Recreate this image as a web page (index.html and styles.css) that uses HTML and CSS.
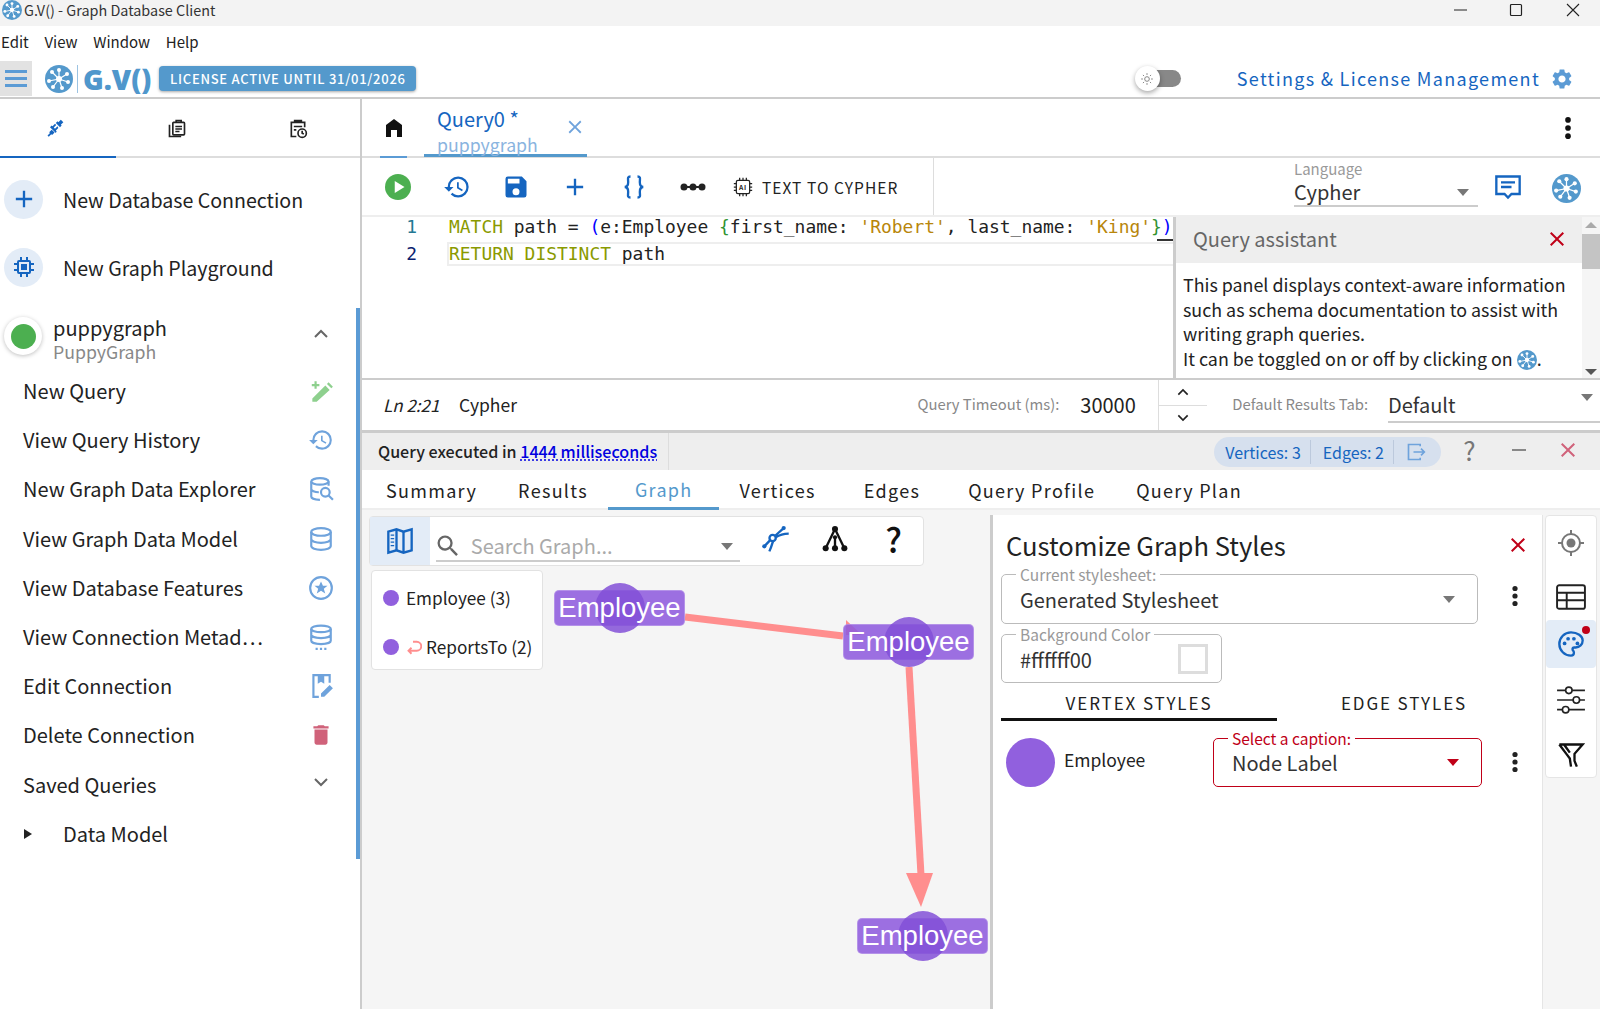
FILE: index.html
```html
<!DOCTYPE html>
<html lang="en">
<head>
<meta charset="utf-8">
<title>G.V() - Graph Database Client</title>
<link rel="stylesheet" href="styles.css">
</head>
<body>
<svg class="sprites" width="0" height="0">
  <symbol id="logo" viewBox="0 0 28 28">
    <circle cx="14" cy="14" r="14" fill="#5499cc"/>
    <g stroke="#fff" stroke-width="1.2"><path d="M14 14 14 5M14 14 22 9M14 14 23 17M14 14 17 23M14 14 8 22M14 14 4 16M14 14 7 7"/></g>
    <g fill="#fff"><circle cx="14" cy="14" r="3"/><circle cx="14" cy="5" r="2"/><circle cx="22" cy="9" r="2"/><circle cx="23" cy="17" r="2"/><circle cx="17" cy="23" r="2"/><circle cx="8" cy="22" r="2"/><circle cx="4" cy="16" r="2"/><circle cx="7" cy="7" r="2"/></g>
  </symbol>
  <symbol id="history" viewBox="0 0 24 24"><path fill="currentColor" d="M13 3a9 9 0 0 0-9 9H1l3.89 3.89.07.14L9 12H6c0-3.87 3.13-7 7-7s7 3.13 7 7-3.13 7-7 7c-1.93 0-3.68-.79-4.94-2.06l-1.42 1.42A8.954 8.954 0 0 0 13 21a9 9 0 0 0 0-18zm-1 5v5l4.28 2.54.72-1.21-3.5-2.08V8H12z"/></symbol>
  <symbol id="plus" viewBox="0 0 24 24"><path fill="currentColor" d="M19 13h-6v6h-2v-6H5v-2h6V5h2v6h6v2z"/></symbol>
  <symbol id="close" viewBox="0 0 24 24"><path fill="currentColor" d="M19 6.41 17.59 5 12 10.59 6.41 5 5 6.41 10.59 12 5 17.59 6.41 19 12 13.41 17.59 19 19 17.59 13.41 12z"/></symbol>
  <symbol id="kebab" viewBox="0 0 24 24"><g fill="currentColor"><circle cx="12" cy="4.5" r="2.6"/><circle cx="12" cy="12" r="2.6"/><circle cx="12" cy="19.5" r="2.6"/></g></symbol>
  <symbol id="db" viewBox="0 0 24 24"><g fill="none" stroke="currentColor" stroke-width="2"><ellipse cx="12" cy="5.5" rx="9" ry="3.5"/><path d="M3 5.5v13c0 2 4 3.5 9 3.5s9-1.500 9-3.500v-13M3 12c0 2 4 3.500 9 3.500s9-1.500 9-3.500"/></g></symbol>
</svg>

<div class="app">
  <div class="titlebar">
    <svg class="ico-logo-sm"><use href="#logo"/></svg>
    <span class="title-text">G.V() - Graph Database Client</span>
    <div class="winctl">
      <svg class="win" viewBox="0 0 14 14"><path d="M0 7h13" stroke="#222" fill="none"/></svg>
      <svg class="win" viewBox="0 0 14 14"><rect x="1.500" y="1.500" width="11" height="11" rx="1" stroke="#222" stroke-width="1.200" fill="none"/></svg>
      <svg class="win" viewBox="0 0 14 14"><path d="M1 1l12 12M13 1 1 13" stroke="#222" stroke-width="1.100" fill="none"/></svg>
    </div>
  </div>
  <div class="menubar"><span>Edit</span><span>View</span><span>Window</span><span>Help</span></div>
  <header class="header">
    <div class="burger"><i></i><i></i><i></i></div>
    <svg class="ico-logo"><use href="#logo"/></svg>
    <span class="logo-div"></span>
    <span class="logo-text">G.V()</span>
    <span class="license">LICENSE ACTIVE UNTIL 31/01/2026</span>
    <div class="header-right">
      <div class="toggle"><span class="knob"><svg viewBox="0 0 24 24" class="sun"><g fill="none" stroke="#777" stroke-width="1.500"><circle cx="12" cy="12" r="4"/><path d="M12 2v3M12 19v3M2 12h3M19 12h3M5 5l2 2M17 17l2 2M5 19l2-2M17 7l2-2"/></g></svg></span></div>
      <span class="settings">Settings &amp; License Management</span>
      <svg class="gear" viewBox="0 0 24 24"><path fill="#5b9bd5" d="M19.14 12.94c.04-.3.06-.61.06-.94 0-.32-.02-.64-.07-.94l2.03-1.58a.49.49 0 0 0 .12-.61l-1.92-3.32a.488.488 0 0 0-.59-.22l-2.39.96c-.5-.38-1.03-.7-1.62-.94l-.36-2.54a.484.484 0 0 0-.48-.41h-3.84c-.24 0-.43.17-.47.41l-.36 2.54c-.59.24-1.13.57-1.62.94l-2.39-.96c-.22-.08-.47 0-.59.22L2.74 8.87c-.12.21-.08.47.12.61l2.03 1.58c-.05.3-.09.63-.09.94s.02.64.07.94l-2.03 1.58a.49.49 0 0 0-.12.61l1.92 3.32c.12.22.37.29.59.22l2.39-.96c.5.38 1.03.7 1.62.94l.36 2.54c.05.24.24.41.48.41h3.84c.24 0 .44-.17.47-.41l.36-2.54c.59-.24 1.13-.56 1.62-.94l2.39.96c.22.08.47 0 .59-.22l1.92-3.32c.12-.22.07-.47-.12-.61l-2.01-1.58zM12 15.6c-1.98 0-3.6-1.62-3.6-3.6s1.62-3.6 3.6-3.6 3.6 1.62 3.6 3.6-1.62 3.6-3.6 3.6z"/></svg>
    </div>
  </header>

  <div class="workspace">
    <aside class="sidebar">
      <div class="side-tabs">
        <div class="side-tab active">
          <svg viewBox="0 0 24 24" class="i20"><path fill="#1565c0" d="M3 21l3-3-1-1 3-3 3.500 3.500-3 3-1-1-3 3zM13 18 6 11l2-2 1 1 3-3 1.500 1.500-3 3 1.500 1.500 3-3L16 12l-3 3 1 1zM13 6l2-2 1 1 3-3 3 3-3 3 1 1-2 2z"/></svg>
        </div>
        <div class="side-tab">
          <svg viewBox="0 0 24 24" class="i20"><g fill="none" stroke="#222" stroke-width="2"><rect x="7" y="4" width="14" height="15" rx="1"/><path d="M3 7v14h14M10 9h8M10 12h8M10 15h5"/><path d="M11 4V2h6v2" /></g></svg>
        </div>
        <div class="side-tab">
          <svg viewBox="0 0 24 24" class="i20"><g fill="none" stroke="#222" stroke-width="2"><path d="M10 21H4V4h16v6M8 4V2h8v2M7 9h10M7 13h3"/><circle cx="17" cy="17" r="5"/><path d="M17 14v3l2 1"/></g></svg>
        </div>
      </div>
      <div class="action-row">
        <span class="round-btn"><svg class="i28 blue"><use href="#plus"/></svg></span>
        <span>New Database Connection</span>
      </div>
      <div class="action-row">
        <span class="round-btn"><svg viewBox="0 0 24 24" class="i24"><g fill="none" stroke="#1565c0" stroke-width="2"><rect x="6" y="6" width="12" height="12" rx="1"/><rect x="10" y="10" width="4" height="4" fill="#1565c0"/><path d="M9 2v3M15 2v3M9 19v3M15 19v3M2 9h3M2 15h3M19 9h3M19 15h3"/></g></svg></span>
        <span>New Graph Playground</span>
      </div>
      <div class="conn-row">
        <span class="status-dot"><i></i></span>
        <div class="conn-text"><div class="conn-name">puppygraph</div><div class="conn-type">PuppyGraph</div></div>
        <svg viewBox="0 0 24 24" class="i24 grey chev"><path fill="none" stroke="currentColor" stroke-width="2" d="M6 15l6-6 6 6"/></svg>
      </div>
      <ul class="menu">
        <li><span>New Query</span><svg viewBox="0 0 24 24" class="i26"><path fill="#8ed08e" d="M4 22v-3L16 7l4 4L8 22zM17.500 5.500 19 4l4 4-1.500 1.500zM6 3h2v2.500h2.500v2H8V10H6V7.500H3.500v-2H6z"/></svg></li>
        <li><span>View Query History</span><svg class="i26 lblue"><use href="#history"/></svg></li>
        <li><span>New Graph Data Explorer</span><svg viewBox="0 0 24 24" class="i26 lblue"><g fill="none" stroke="currentColor" stroke-width="2"><ellipse cx="11" cy="5" rx="8" ry="3"/><path d="M3 5v14c0 1.500 3 3 8 3M19 5v4M3 12c0 1.500 3 3 7 3"/><circle cx="16" cy="15" r="4"/><path d="M19 18l4 4"/></g></svg></li>
        <li><span>View Graph Data Model</span><svg class="i26 lblue"><use href="#db"/></svg></li>
        <li><span>View Database Features</span><svg viewBox="0 0 24 24" class="i26 lblue"><circle cx="12" cy="12" r="10" fill="none" stroke="currentColor" stroke-width="2"/><path fill="currentColor" d="M12 6l1.800 4h4.200l-3.400 2.700 1.300 4.300-3.900-2.500L8.100 17l1.300-4.300L6 10h4.200z"/></svg></li>
        <li><span>View Connection Metad⋯</span><svg viewBox="0 0 24 24" class="i26 lblue"><g fill="none" stroke="currentColor" stroke-width="2"><ellipse cx="12" cy="4.500" rx="9" ry="3"/><path d="M3 4.500v11c0 1.700 4 3 9 3s9-1.300 9-3v-11M3 10c0 1.700 4 3 9 3s9-1.300 9-3M7 23h2M11 23h2M15 23h2"/></g></svg></li>
        <li><span>Edit Connection</span><svg viewBox="0 0 24 24" class="i26 lblue"><g fill="none" stroke="currentColor" stroke-width="2"><path d="M20 9V2H5v20h5"/></g><path fill="currentColor" d="M9 2h6v8l-3-2-3 2zM12 22v-3l8-8 3 3-8 8z"/></svg></li>
        <li><span>Delete Connection</span><svg viewBox="0 0 24 24" class="i26"><path fill="#d0627a" d="M6 19c0 1.100.9 2 2 2h8c1.100 0 2-.9 2-2V7H6v12zM19 4h-3.500l-1-1h-5l-1 1H5v2h14V4z"/></svg></li>
        <li><span>Saved Queries</span><svg viewBox="0 0 24 24" class="i24 grey chev"><path fill="none" stroke="currentColor" stroke-width="2" d="M6 9l6 6 6-6"/></svg></li>
        <li class="tree"><i class="tri"></i><span>Data Model</span></li>
      </ul>
      <div class="side-scroll"></div>
    </aside>

    <main class="main">
      <div class="query-tabs">
        <div class="home-tab"><svg viewBox="0 0 24 24" class="i24"><path fill="#111" d="M12 3 4 9v12h5v-7h6v7h5V9z"/></svg></div>
        <div class="query-tab">
          <div class="q-title">Query0 *</div>
          <div class="q-sub">puppygraph</div>
          <svg class="i22 qx"><use href="#close"/></svg>
        </div>
        <svg class="i26 kebab-top"><use href="#kebab"/></svg>
      </div>

      <div class="toolbar">
        <div class="tool-group">
          <span class="tool"><svg viewBox="0 0 24 24" class="i26"><circle cx="12" cy="12" r="12" fill="#4caf50"/><path fill="#fff" d="M9 6.500l9 5.500-9 5.500z"/></svg></span>
          <span class="tool"><svg class="i28 blue"><use href="#history"/></svg></span>
          <span class="tool"><svg viewBox="0 0 24 24" class="i28 blue"><path fill="currentColor" d="M17 3H5a2 2 0 0 0-2 2v14a2 2 0 0 0 2 2h14a2 2 0 0 0 2-2V7l-4-4zm-5 16a3 3 0 1 1 0-6 3 3 0 0 1 0 6zm3-10H5V5h10v4z"/></svg></span>
          <span class="tool"><svg class="i28 blue"><use href="#plus"/></svg></span>
          <span class="tool"><svg viewBox="0 0 24 24" class="i28 blue"><path fill="none" stroke="currentColor" stroke-width="2" d="M9 3C6 3 7 5 7 8s-1 4-3 4c2 0 3 1 3 4s-1 5 2 5M15 3c3 0 2 2 2 5s1 4 3 4c-2 0-3 1-3 4s1 5-2 5"/></svg></span>
          <span class="tool"><svg viewBox="0 0 28 12" class="dots"><path d="M2 6h24" stroke="#222" stroke-width="2"/><g fill="#222"><circle cx="5" cy="6" r="3.500"/><circle cx="14" cy="6" r="3.500"/><circle cx="23" cy="6" r="3.500"/></g></svg></span>
          <span class="t2c">
            <svg viewBox="0 0 24 24" class="i20"><g fill="none" stroke="#222" stroke-width="1.500"><rect x="4" y="4" width="16" height="16" rx="2"/><path d="M8 1v3M12 1v3M16 1v3M8 20v3M12 20v3M16 20v3M1 8h3M1 12h3M1 16h3M20 8h3M20 12h3M20 16h3"/></g><text x="12" y="15.500" class="ai">AI</text></svg>
            TEXT TO CYPHER
          </span>
        </div>
        <div class="lang-area">
          <div class="lang">
            <div class="lang-label">Language</div>
            <div class="lang-val">Cypher<i class="caret"></i></div>
          </div>
          <svg viewBox="0 0 24 24" class="i28 chat"><path fill="none" stroke="currentColor" stroke-width="2" d="M2 3h20v15h-7l-3 3-3-3H2zM6 8h12M6 12h9"/></svg>
          <svg class="logo28"><use href="#logo"/></svg>
        </div>
      </div>

      <div class="editor-split">
        <div class="editor">
          <div class="code-line"><span class="ln ln1">1</span><code><span class="k">MATCH</span> path = <span class="b1">(</span>e:Employee <span class="b2">{</span>first_name: <span class="s">'Robert'</span>, last_name: <span class="s">'King'</span><span class="b2">}</span><span class="b1">)</span></code></div>
          <div class="code-line active"><span class="ln ln2">2</span><code><span class="k">RETURN DISTINCT</span> path</code></div>
          <span class="cursor-mark"></span>
        </div>
        <div class="assistant">
          <div class="assist-head"><span>Query assistant</span><svg class="i24 red"><use href="#close"/></svg></div>
          <div class="assist-body">
            This panel displays context-aware information such as schema documentation to assist with writing graph queries.<br>
            It can be toggled on or off by clicking on <svg class="logo-inline"><use href="#logo"/></svg>.
          </div>
        </div>
        <div class="vscroll"><i class="up"></i><span class="thumb"></span><i class="down"></i></div>
      </div>

      <div class="statusbar">
        <em class="pos">Ln 2:21</em>
        <span class="mode">Cypher</span>
        <span class="muted timeout">Query Timeout (ms):</span>
        <span class="num">30000</span>
        <div class="spinner">
          <span><svg viewBox="0 0 24 24" class="i16"><path fill="none" stroke="#222" stroke-width="2.500" d="M5 16l7-7 7 7"/></svg></span>
          <span><svg viewBox="0 0 24 24" class="i16"><path fill="none" stroke="#222" stroke-width="2.500" d="M5 8l7 7 7-7"/></svg></span>
        </div>
        <span class="muted drt">Default Results Tab:</span>
        <div class="drt-select"><span>Default</span><i class="caret"></i></div>
      </div>

      <div class="results-head">
        <div class="exec">Query executed in <a href="#" class="ms">1444 milliseconds</a></div>
        <div class="head-right">
          <div class="pill">
            <span>Vertices: 3</span><span>Edges: 2</span>
            <span><svg viewBox="0 0 24 24" class="i20"><path fill="none" stroke="currentColor" stroke-width="2" d="M17 5V3H3v18h14v-2M9 12h13M18 8l4 4-4 4"/></svg></span>
          </div>
          <span class="head-btn help">?</span>
          <span class="head-btn"><svg viewBox="0 0 24 24" class="i24"><path d="M5 12h14" stroke="#888" stroke-width="2"/></svg></span>
          <span class="head-btn"><svg class="i24 pink"><use href="#close"/></svg></span>
        </div>
      </div>

      <nav class="result-tabs">
        <span>Summary</span><span>Results</span><span class="on">Graph</span><span>Vertices</span><span class="roomy">Edges</span><span>Query Profile</span><span>Query Plan</span>
      </nav>

      <section class="graph-area">
        <div class="canvas">
          <svg class="edges" viewBox="0 0 630 500" width="630" height="500">
            <path d="M323 107 481 126" stroke="#ff8e8e" stroke-width="7" fill="none"/>
            <path d="M547 157 559 365" stroke="#ff8e8e" stroke-width="7" fill="none"/>
            <path d="M544 363H571L559 397z" fill="#ff8e8e"/>
            <path d="M484 110 500 125H484z" fill="#ff8e8e"/>
          </svg>
          <div class="node n1"><i></i><span>Employee</span></div>
          <div class="node n2"><i></i><span>Employee</span></div>
          <div class="node n3"><i></i><span>Employee</span></div>

          <div class="search-card">
            <span class="map-btn"><svg viewBox="0 0 24 24" class="i28 blue"><g fill="none" stroke="currentColor" stroke-width="2"><path d="M2 4l7-2 6 2 7-2v18l-7 2-6-2-7 2z"/><path d="M9 2v18M15 4v18"/></g><path d="M4 7h3M4 10h3M4 13h3M4 16h3" stroke="currentColor"/></svg></span>
            <div class="search-field">
              <svg viewBox="0 0 24 24" class="i28 sgrey"><path fill="currentColor" d="M15.500 14h-.79l-.28-.27A6.471 6.471 0 0 0 16 9.500 6.500 6.500 0 1 0 9.500 16c1.610 0 3.090-.59 4.230-1.570l.27.28v.79l5 4.990L20.490 19l-4.990-5zm-6 0C7.010 14 5 11.990 5 9.500S7.010 5 9.500 5 14 7.010 14 9.500 11.990 14 9.500 14z"/></svg>
              <span class="placeholder">Search Graph...</span>
              <i class="caret"></i>
            </div>
            <span class="s-tool"><svg viewBox="0 0 24 24" class="i28 blue"><g fill="none" stroke="currentColor" stroke-width="2"><circle cx="9.100" cy="11.100" r="2.700"/><path d="M11.500 9 18.600 2.600M11.800 10.500C15 8.500 19 7.500 22.900 7.400M7 13 2 18.300M9.500 13.800C8.500 17 7.500 20 6.300 22.600"/></g><g fill="currentColor"><circle cx="18.600" cy="2.600" r="1.800"/><circle cx="2" cy="18.300" r="1.800"/></g></svg></span>
            <span class="s-tool"><svg viewBox="0 0 24 24" class="i28"><path fill="none" stroke="#111" stroke-width="2" d="M12 3.500 4 20M12 3.500 20 20M12 10v10"/><g fill="#111"><circle cx="12" cy="3.500" r="2.600"/><circle cx="12" cy="10.500" r="1.800"/><circle cx="4" cy="20" r="2.600"/><circle cx="12" cy="20" r="2.600"/><circle cx="20" cy="20" r="2.600"/></g></svg></span>
            <span class="s-tool qmark">?</span>
          </div>

          <div class="legend">
            <div class="legend-row"><i class="dot"></i><span>Employee (3)</span></div>
            <div class="legend-row"><i class="dot"></i><svg viewBox="0 0 24 24" class="loop"><path fill="none" stroke="#ff8e8e" stroke-width="2.500" d="M12 5h5a6 6 0 0 1 0 12H6M10 13l-4 4 4 4"/></svg><span>ReportsTo (2)</span></div>
          </div>
        </div>

        <div class="style-panel">
          <div class="panel-title"><span>Customize Graph Styles</span><svg class="i24 red"><use href="#close"/></svg></div>
          <div class="field-row">
            <fieldset class="field wide"><legend>Current stylesheet:</legend><div class="field-val">Generated Stylesheet<i class="caret"></i></div></fieldset>
            <svg class="i24 kebab"><use href="#kebab"/></svg>
          </div>
          <fieldset class="field color"><legend>Background Color</legend><div class="field-val">#ffffff00<b class="swatch"></b></div></fieldset>
          <div class="style-tabs"><span class="on">VERTEX STYLES</span><span>EDGE STYLES</span></div>
          <div class="vertex-row">
            <i class="v-circle"></i>
            <span class="v-name">Employee</span>
            <fieldset class="field caption"><legend>Select a caption:</legend><div class="field-val">Node Label<i class="caret"></i></div></fieldset>
            <svg class="i24 kebab"><use href="#kebab"/></svg>
          </div>
        </div>

        <div class="tool-strip">
          <span><svg viewBox="0 0 28 28" class="i28"><g fill="none" stroke="#777" stroke-width="2"><circle cx="14" cy="14" r="9"/><path d="M14 1v4M14 23v4M1 14h4M23 14h4"/></g><circle cx="14" cy="14" r="4.500" fill="#777"/></svg></span>
          <span><svg viewBox="0 0 28 28" class="i30"><g fill="none" stroke="#222" stroke-width="1.800"><rect x="1" y="3" width="26" height="22" rx="2"/><path d="M1 10h26M1 17h26M10 10v15"/></g></svg></span>
          <span class="on"><svg viewBox="0 0 24 24" class="i28 blue"><g fill="none" stroke="currentColor" stroke-width="2"><path d="M12 2C6.500 2 2 6.500 2 12s4.500 10 10 10c1.400 0 2.500-1.100 2.500-2.500 0-.6-.2-1.200-.6-1.700-.4-.4-.6-1-.6-1.300 0-.8.700-1.500 1.500-1.500H16c3.300 0 6-2.700 6-6 0-4-4.500-7-10-7z"/></g><g fill="currentColor"><circle cx="6.500" cy="11.500" r="1.600"/><circle cx="9.500" cy="7.500" r="1.600"/><circle cx="14.500" cy="7.500" r="1.600"/><circle cx="17.500" cy="11.500" r="1.600"/></g></svg><b class="reddot"></b></span>
          <span><svg viewBox="0 0 28 28" class="i30"><g fill="none" stroke="#222" stroke-width="1.500"><path d="M1 5h8M15 5h12M1 14h15M22 14h5M1 23h5M12 23h15"/><circle cx="12" cy="5" r="3"/><circle cx="19" cy="14" r="3"/><circle cx="9" cy="23" r="3"/></g></svg></span>
          <span><svg viewBox="0 0 24 24" class="i28"><g fill="none" stroke="#111" stroke-width="2"><path d="M2 3h20l-7 8v6l2 5M2 3l6 8 3 4 1 7M6 3l5 7"/></g></svg></span>
        </div>
      </section>
    </main>
  </div>
</div>
</body>
</html>
```
FILE: styles.css
```css
* { box-sizing: border-box; }
html, body { margin: 0; height: 100%; overflow: hidden; background: #fff; }
body { font-family: "Noto Sans CJK JP", "Noto Sans", sans-serif; color: #222; font-size: 18px; }
i, em { font-style: normal; }
.sprites { position: absolute; }
svg { display: block; flex: none; }
.i16 { width: 16px; height: 16px; }
.i20 { width: 20px; height: 20px; }
.i22 { width: 22px; height: 22px; }
.i24 { width: 24px; height: 24px; }
.i26 { width: 26px; height: 26px; }
.i28 { width: 28px; height: 28px; }
.i30 { width: 30px; height: 30px; }
.blue { color: #1565c0; }
.lblue { color: #6fa3dc; }
.grey { color: #666; }
.red { color: #c00018; }
.pink { color: #d0627a; }
.app { display: flex; flex-direction: column; width: 1600px; height: 1009px; overflow: hidden; }

.titlebar { height: 26px; flex: none; background: #f3f3f3; display: flex; align-items: center; font-size: 14.400px; line-height: 18px; padding-bottom: 7px; }
.ico-logo-sm { width: 20px; height: 20px; margin: 0 2px 0 2px; }
.title-text { color: #333; }
.winctl { margin-left: auto; display: flex; gap: 43px; padding-right: 20px; }
.win { width: 14px; height: 14px; }
.win:first-child { margin-right: -2px; }

.menubar { height: 34px; flex: none; display: flex; align-items: center; gap: 15.700px; padding-left: 1px; padding-bottom: 2px; font-size: 15px; line-height: 20px; }

.header { height: 39px; flex: none; display: flex; align-items: center; border-bottom: 2px solid #ccc; }
.burger { width: 32px; height: 35px; background: #e2e2e2; display: flex; flex-direction: column; justify-content: center; gap: 4px; padding: 0 5px; }
.burger i { height: 3px; background: #5b9bd5; }
.ico-logo { width: 28px; height: 28px; margin-left: 13px; }
.logo-div { width: 1px; height: 28px; background: #9cc3e2; margin: 0 5px 0 4px; }
.logo-text { font-family: "Open Sans", "Noto Sans", sans-serif; font-weight: 800; font-size: 28px; line-height: 36px; color: #4f97cc; width: 70px; white-space: nowrap; }
.license { margin-left: 6px; height: 25px; line-height: 25px; padding: 0 10px 0 11px; background: #5499cc; color: #fff; font-weight: 500; font-size: 13px; letter-spacing: .74px; border-radius: 4px; box-shadow: 0 1px 3px rgba(0,0,0,.35); white-space: nowrap; }
.header-right { margin-left: auto; display: flex; align-items: center; }
.toggle { width: 33px; height: 17px; border-radius: 9px; background: #888; position: relative; margin-right: 56px; }
.knob { position: absolute; left: -13px; top: -4px; width: 25px; height: 25px; border-radius: 50%; background: #fff; box-shadow: 0 2px 5px rgba(0,0,0,.35); display: flex; align-items: center; justify-content: center; }
.sun { width: 14px; height: 14px; }
.settings { color: #1565c0; font-size: 18px; letter-spacing: 1.300px; line-height: 24px; white-space: nowrap; margin-top: -2px; }
.gear { width: 24px; height: 24px; margin: 0 26px 0 10px; }

.workspace { flex: 1; display: flex; min-height: 0; }

.sidebar { width: 362px; flex: none; border-right: 2px solid #ccc; position: relative; }
.side-tabs { height: 59px; display: flex; border-bottom: 2px solid #ddd; margin-bottom: 7px; }
.side-tab { width: 121px; display: flex; align-items: center; justify-content: center; margin-bottom: -2px; }
.side-tab.active { width: 116px; border-bottom: 2px solid #1565c0; padding-right: 6px; }
.action-row { height: 68px; display: flex; align-items: center; font-size: 19.600px; line-height: 28px; padding-left: 4px; gap: 20px; }
.action-row span:last-child { padding-top: 1px; }
.round-btn { width: 39px; height: 39px; border-radius: 50%; background: #e3ecf7; display: flex; align-items: center; justify-content: center; }
.conn-row { height: 56px; margin-top: 7px; display: flex; align-items: center; padding-left: 4px; position: relative; }
.status-dot { width: 38px; height: 38px; border-radius: 50%; background: #fff; box-shadow: 0 1px 4px rgba(0,0,0,.25); display: flex; align-items: center; justify-content: center; flex: none; }
.status-dot i { width: 25px; height: 25px; border-radius: 50%; background: #4caf50; }
.conn-text { margin-left: 11px; margin-top: 6px; }
.conn-name { font-size: 20px; line-height: 24px; }
.conn-type { font-size: 17.700px; line-height: 23px; color: #888; }
.chev { position: absolute; left: 309px; top: 14px; }
.menu { list-style: none; margin: 2.500px 0 0; padding: 0; }
.menu li { height: 49.200px; display: flex; align-items: center; justify-content: space-between; padding: 0 26px 0 23px; font-size: 20px; line-height: 28px; position: relative; white-space: nowrap; }
.menu li .chev { top: 10px; }
.menu .tree { justify-content: flex-start; }
.tri { width: 0; height: 0; border-left: 8px solid #222; border-top: 5px solid transparent; border-bottom: 5px solid transparent; margin: 0 31px 0 1px; }
.side-scroll { position: absolute; left: 356px; top: 209px; width: 4px; height: 551px; background: #5b9bd5; }

.main { flex: 1; min-width: 0; display: flex; flex-direction: column; }
.query-tabs { height: 59px; flex: none; display: flex; border-bottom: 2px solid #ddd; position: relative; padding-left: 18px; }
.home-tab { width: 27px; display: flex; align-items: center; justify-content: center; border-bottom: 2px solid #5b9bd5; margin-bottom: -2px; }
.query-tab { width: 163px; margin-left: 17px; padding-left: 13px; border-bottom: 3px solid #5499cc; margin-bottom: -1px; position: relative; }
.q-title { color: #1565c0; font-size: 20px; line-height: 24px; margin-top: 8px; }
.q-sub { color: #8ab4e0; font-size: 17.700px; line-height: 21px; margin-top: 3px; }
.qx { position: absolute; right: 1px; top: 17px; color: #6fa3dc; }
.kebab-top { margin-left: auto; align-self: center; margin-right: 19px; color: #111; }

.toolbar { height: 57px; flex: none; display: flex; }
.tool-group { width: 572px; flex: none; display: flex; align-items: center; padding-left: 6px; border-right: 1px solid #ddd; }
.tool { width: 59px; display: flex; justify-content: center; }
.dots { width: 28px; height: 12px; }
.t2c { display: flex; align-items: center; gap: 9px; margin-left: 11px; font-size: 15.500px; letter-spacing: 1.050px; line-height: 20px; white-space: nowrap; }
.ai { font-size: 8px; font-weight: 700; text-anchor: middle; fill: #222; }
.lang-area { flex: 1; display: flex; align-items: center; padding-left: 360px; }
.lang { width: 184px; border-bottom: 2px solid #ccc; margin-top: -7px; }
.lang-label { font-size: 15px; line-height: 18px; color: #999; }
.lang-val { font-size: 20px; line-height: 27px; color: #333; position: relative; }
.caret { position: absolute; width: 0; height: 0; border-left: 6.500px solid transparent; border-right: 6.500px solid transparent; border-top: 7px solid #777; }
.lang-val .caret { right: 9px; top: 11px; }
.chat { color: #1565c0; margin-left: 16px; margin-top: 0; }
.logo28 { width: 29px; height: 29px; margin-left: 30px; margin-top: 4px; }

.editor-split { height: 165px; flex: none; display: flex; border-bottom: 2px solid #ccc; position: relative; border-top: 2px solid #eee; }
.editor { flex: 1; min-width: 0; position: relative; overflow: hidden; }
.code-line { height: 27px; display: flex; font-family: "DejaVu Sans Mono", "Liberation Mono", monospace; font-size: 17.950px; line-height: 27px; white-space: pre; position: relative; top: -4px; }
.code-line code { font: inherit; }
.ln { width: 87px; flex: none; padding-right: 32px; text-align: right; }
.ln1 { color: #237893; }
.ln2 { color: #0b216f; }
.active code { display: block; width: 800px; border: 2px solid #eee; border-right: none; line-height: 20px; height: 24px; margin: 2px 0 0 -2px; }
.k { color: #8a9a00; }
.s { color: #b8860b; }
.b1 { color: #0000ff; }
.b2 { color: #319331; }
.cursor-mark { position: absolute; right: 0; top: 22px; width: 16px; height: 2px; background: #333; }
.assistant { width: 409px; flex: none; border-left: 3px solid #ccc; display: flex; flex-direction: column; }
.assist-head { height: 46px; background: #eee; display: flex; align-items: center; justify-content: space-between; padding: 0 13px 3px 17px; font-size: 20px; line-height: 28px; color: #666; }
.assist-body { padding: 9px 6px 0 7px; font-size: 17.850px; line-height: 24.600px; }
.logo-inline { display: inline-block; width: 20px; height: 20px; vertical-align: -4px; }
.vscroll { width: 18px; flex: none; background: #f5f5f5; position: relative; }
.up, .down { position: absolute; left: 3px; width: 0; height: 0; border-left: 6px solid transparent; border-right: 6px solid transparent; }
.up { top: 5px; border-bottom: 6px solid #aaa; }
.down { bottom: 3px; border-top: 6px solid #555; }
.thumb { position: absolute; left: 0; top: 17px; width: 18px; height: 35px; background: #c4c4c4; }

.statusbar { height: 50px; flex: none; display: flex; align-items: center; position: relative; padding-left: 21px; }
.pos { font-style: italic; font-size: 17px; line-height: 24px; width: 76px; }
.mode { font-size: 17.500px; line-height: 24px; margin-top: 0; }
.muted { color: #888; font-size: 14.800px; line-height: 22px; white-space: nowrap; margin-top: -2px; }
.timeout { margin-left: auto; }
.num { font-size: 20px; line-height: 26px; margin-left: 21px; width: 78px; }
.spinner { width: 49px; height: 50px; border-left: 1px solid #ddd; display: flex; flex-direction: column; }
.spinner span { flex: 1; display: flex; justify-content: center; align-items: center; }
.spinner span:first-child { border-bottom: 1px solid #ddd; }
.drt { margin-left: 25px; }
.drt-select { width: 212px; margin-left: 20px; height: 36px; border-bottom: 2px solid #ccc; position: relative; font-size: 20px; line-height: 35px; color: #333; }
.drt-select .caret { right: 7px; top: 7px; }

.results-head { height: 40px; flex: none; background: #eee; border-top: 3px solid #ccc; display: flex; align-items: center; }
.exec { width: 307px; padding-left: 16px; height: 100%; border-right: 1px solid #ddd; font-weight: 500; font-size: 16.100px; line-height: 37px; white-space: nowrap; }
.ms { color: #0000e0; text-decoration: underline dotted; text-underline-offset: 2px; }
.head-right { margin-left: auto; display: flex; align-items: center; padding-right: 8px; }
.pill { height: 30px; background: #d6e0ee; border-radius: 15px; display: flex; align-items: center; color: #1565c0; font-size: 16px; line-height: 24px; padding: 0 15px 0 11px; margin-right: 4px; }
.pill span { padding: 0 9px 0 0; margin-right: 12px; border-right: 1px solid #bcc9dc; white-space: nowrap; }
.pill span:last-child { border: 0; margin: 0; padding: 0; color: #6fa3dc; }
.head-btn { width: 49px; display: flex; justify-content: center; margin-top: -4px; }
.help { font-size: 26px; line-height: 30px; color: #777; }

.result-tabs { height: 40px; flex: none; display: flex; border-bottom: 2px solid #eee; font-size: 18px; letter-spacing: 1.300px; line-height: 40px; }
.result-tabs span { padding: 0 20.500px; height: 40px; white-space: nowrap; }
.result-tabs span:first-child { padding-left: 24px; }
.result-tabs .on { color: #5499cc; border-bottom: 3px solid #5499cc; padding: 0 26.500px; line-height: 38px; margin-bottom: -1px; }
.result-tabs .roomy { padding: 0 27.500px; }

.graph-area { flex: 1; min-height: 0; background: #f5f5f5; display: flex; position: relative; }
.canvas { width: 628px; flex: none; position: relative; overflow: hidden; }
.edges { position: absolute; left: 0; top: 0; }
.node { position: absolute; width: 131px; height: 36px; border-radius: 5px; background: rgba(144, 92, 222, .88); border: 1px solid rgba(255, 255, 255, .25); display: flex; align-items: center; justify-content: center; }
.node i { position: absolute; left: 40px; top: -8px; width: 50px; height: 50px; border-radius: 50%; background: rgba(130, 80, 215, .85); }
.node span { position: relative; color: #fff; font-family: "Liberation Sans", Arial, sans-serif; font-size: 27.500px; line-height: 32px; }
.n1 { left: 192px; top: 80px; }
.n2 { left: 481px; top: 114px; }
.n3 { left: 495px; top: 408px; }

.search-card { position: absolute; left: 7px; top: 6px; width: 555px; height: 50px; background: #fff; border: 1px solid #e2e2e2; border-radius: 4px; display: flex; align-items: center; }
.map-btn { width: 60px; height: 48px; background: #e3ecf7; display: flex; align-items: center; justify-content: center; }
.search-field { width: 305px; height: 45px; align-self: flex-start; margin: 0 7px 0 6px; border-bottom: 2px solid #ccc; display: flex; align-items: center; position: relative; padding: 16px 0 0 0; }
.sgrey { color: #666; margin: -2px 0 0 -2px; }
.placeholder { margin-left: 9px; font-size: 20px; line-height: 26px; color: #aaa; margin-top: -1px; }
.search-field .caret { right: 7px; top: 26px; }
.s-tool { width: 59px; display: flex; justify-content: center; margin-top: -4px; }
.qmark { font-size: 34px; line-height: 36px; color: #111; font-weight: 500; }

.legend { position: absolute; left: 9px; top: 60px; width: 172px; height: 100px; background: #fff; border: 1px solid #e2e2e2; border-radius: 4px; padding-top: 2px; }
.legend-row { height: 49px; display: flex; align-items: center; padding-left: 11px; font-size: 17.200px; line-height: 24px; white-space: nowrap; }
.dot { width: 16px; height: 16px; border-radius: 50%; background: #9160de; margin-right: 7px; flex: none; }
.loop { width: 18px; height: 18px; margin: 0 4px 0 -2px; }

.style-panel { width: 553px; flex: none; margin-top: 5px; background: #fff; border-left: 3px solid #ccc; border-right: 1px solid #e5e5e5; padding: 0 0 0 8px; position: relative; }
.panel-title { height: 52px; display: flex; align-items: center; padding: 8px 1px 0 5px; justify-content: space-between; font-size: 25.600px; line-height: 34px; width: 530px; }
.field { margin: 0; padding: 0 0 0 18px; border: 1px solid #bbb; border-radius: 5px; min-width: 0; }
.field legend { padding: 0 4px; margin-left: -4px; font-size: 15.500px; line-height: 14px; color: #999; white-space: nowrap; }
.field-val { font-size: 20px; line-height: 32px; padding-top: 3px; color: #333; position: relative; }
.field-row { display: flex; align-items: center; }
.wide { width: 477px; height: 57px; }
.wide .caret { right: 22px; top: 15px; }
.kebab { color: #222; margin-left: 25px; }
.color { width: 221px; height: 56px; margin-top: 3px; }
.color .field-val { padding-top: 3px; }
.swatch { position: absolute; right: 13px; top: 3px; width: 30px; height: 30px; border: 3px solid #ddd; }
.style-tabs { display: flex; width: 530px; height: 38px; margin-top: 6px; font-size: 17px; letter-spacing: 1.900px; line-height: 28px; }
.style-tabs span { flex: 1; text-align: center; white-space: nowrap; }
.style-tabs .on { width: 276px; flex: none; border-bottom: 3px solid #111; height: 32px; }
.vertex-row { display: flex; align-items: center; margin-top: 4px; position: relative; }
.v-circle { width: 49px; height: 49px; border-radius: 50%; background: #9160de; margin: 6px 0 0 5px; flex: none; }
.v-name { font-size: 17.500px; line-height: 24px; margin-left: 9px; width: 149px; margin-top: 2px; }
.caption { width: 269px; height: 56px; border-color: #c00018; }
.caption legend { color: #c00018; }
.caption .caret { right: 22px; top: 14px; border-top-color: #c00018; }
.caption .field-val { line-height: 30px; }
.vertex-row .kebab { margin: 6px 0 0 21px; }

.tool-strip { position: absolute; left: 1183px; top: 5px; width: 52px; height: 263px; background: #fff; border: 1px solid #e5e5e5; border-radius: 4px; display: flex; flex-direction: column; align-items: center; }
.tool-strip span { width: 100%; height: 48px; display: flex; align-items: center; justify-content: center; position: relative; }
.tool-strip span:nth-child(1) { height: 54px; }
.tool-strip span:nth-child(2) { height: 50px; padding-top: 3px; }
.tool-strip span:nth-child(4) { height: 64px; }
.tool-strip span:nth-child(5) { height: 45px; }
.tool-strip .on { background: #e3ecf7; border-radius: 4px; }
.reddot { position: absolute; right: 6px; top: 6px; width: 8px; height: 8px; border-radius: 50%; background: #c00018; }
```
